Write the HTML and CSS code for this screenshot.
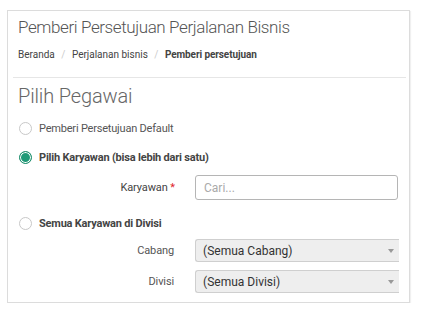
FILE: index.html
```html
<!DOCTYPE html>
<html lang="id">
<head>
  <meta charset="UTF-8" />
  <meta name="viewport" content="width=device-width, initial-scale=1.0" />
  <title>Pemberi Persetujuan Perjalanan Bisnis</title>
  <link rel="stylesheet" href="styles.css">
</head>
<body>
  <div class="card">
    <div class="card-header">
      <h1 class="page-title">Pemberi Persetujuan Perjalanan Bisnis</h1>
      <div class="breadcrumb">
        <span>Beranda</span>
        <span class="sep">/</span>
        <span>Perjalanan bisnis</span>
        <span class="sep">/</span>
        <span class="current">Pemberi persetujuan</span>
      </div>
    </div>
    <div class="card-body">
      <h3 class="section-title">Pilih Pegawai</h3>

      <label class="radio-row">
        <span class="radio"></span>
        <span class="radio-label">Pemberi Persetujuan Default</span>
      </label>

      <label class="radio-row">
        <span class="radio checked"></span>
        <span class="radio-label bold">Pilih Karyawan (bisa lebih dari satu)</span>
      </label>

      <div class="form-row row-karyawan">
        <label class="form-label" for="karyawan">Karyawan <span class="req">*</span></label>
        <input type="text" id="karyawan" class="text-input" placeholder="Cari..." />
      </div>

      <label class="radio-row row-divisi">
        <span class="radio"></span>
        <span class="radio-label bold">Semua Karyawan di Divisi</span>
      </label>

      <div class="form-row row-cabang">
        <span class="form-label">Cabang</span>
        <div class="select-box">
          <span>(Semua Cabang)</span>
          <span class="arrow"></span>
        </div>
      </div>

      <div class="form-row row-div">
        <span class="form-label">Divisi</span>
        <div class="select-box">
          <span>(Semua Divisi)</span>
          <span class="arrow"></span>
        </div>
      </div>
    </div>
  </div>
</body>
</html>
```
FILE: styles.css
```css
html, body {
  margin: 0;
  padding: 0;
  background: #fff;
  font-family: 'Roboto', 'Liberation Sans', sans-serif;
}
.card {
  box-sizing: border-box;
  width: 403px;
  height: 293px;
  margin: 10px 0 0 7px;
  border: 1px solid #dcdcdc;
  box-shadow: 1px 1px 1px rgba(0,0,0,0.06);
  background: #fff;
}
.card-header {
  padding: 5px 10px 0;
}
.page-title {
  margin: 0;
  font-size: 17px;
  font-weight: 300;
  letter-spacing: -0.4px;
  line-height: 22px;
  color: #555;
}
.breadcrumb {
  margin: 9px -7px 0 -5px;
  padding: 0 0 14px 5px;
  font-size: 10px;
  line-height: 16px;
  color: #444;
  border-bottom: 1px solid #e6e6e6;
}
.breadcrumb .sep {
  color: #ccc;
  margin: 0 4px;
}
.breadcrumb .current {
  font-weight: 700;
  letter-spacing: -0.1px;
  color: #444;
}
.card-body {
  padding: 0 10px;
}
.section-title {
  margin: 5px 0 0;
  font-size: 20px;
  font-weight: 300;
  letter-spacing: -0.15px;
  line-height: 26px;
  color: #666;
}
.radio-row {
  display: flex;
  align-items: center;
  height: 20px;
  margin-top: 9px;
  font-size: 11px;
  letter-spacing: -0.2px;
  color: #555;
}
.radio {
  box-sizing: border-box;
  width: 13px;
  height: 13px;
  margin-left: 1px;
  margin-right: 7px;
  border-radius: 50%;
  border: 1px solid #c8c8c8;
  background: #fff;
}
.radio.checked {
  border: 1px solid #1f8f6e;
  background: #1f9a77;
  box-shadow: inset 0 0 0 1px #fff;
}
.radio-label.bold {
  font-weight: 700;
  color: #444;
}
.form-row {
  display: flex;
  align-items: center;
}
.form-label {
  width: 157px;
  text-align: right;
  margin-right: 20px;
  font-size: 11px;
  letter-spacing: -0.1px;
  color: #555;
}
.row-karyawan {
  margin-top: 8px;
}
.row-karyawan .form-label {
  color: #444;
}
.req {
  color: #e0242b;
}
.text-input {
  box-sizing: border-box;
  width: 203px;
  height: 25px;
  padding: 0 8px;
  border: 1px solid #b5b5b5;
  border-radius: 3px;
  font-family: inherit;
  font-size: 12px;
  color: #333;
  outline: none;
}
.text-input::placeholder {
  color: #aaa;
}
.row-divisi {
  margin-top: 13px;
}
.row-cabang {
  margin-top: 6px;
}
.row-div {
  margin-top: 8px;
}
.select-box {
  box-sizing: border-box;
  display: flex;
  align-items: center;
  justify-content: space-between;
  width: 205px;
  height: 23px;
  margin-left: 1px;
  padding: 0 5px 0 7px;
  background: #eee;
  border: 1px solid #cfcfcf;
  border-right: none;
  border-radius: 3px 0 0 3px;
  font-size: 12px;
  color: #333;
}
.arrow {
  width: 0;
  height: 0;
  border-left: 3px solid transparent;
  border-right: 3px solid transparent;
  border-top: 4px solid #999;
}
```
